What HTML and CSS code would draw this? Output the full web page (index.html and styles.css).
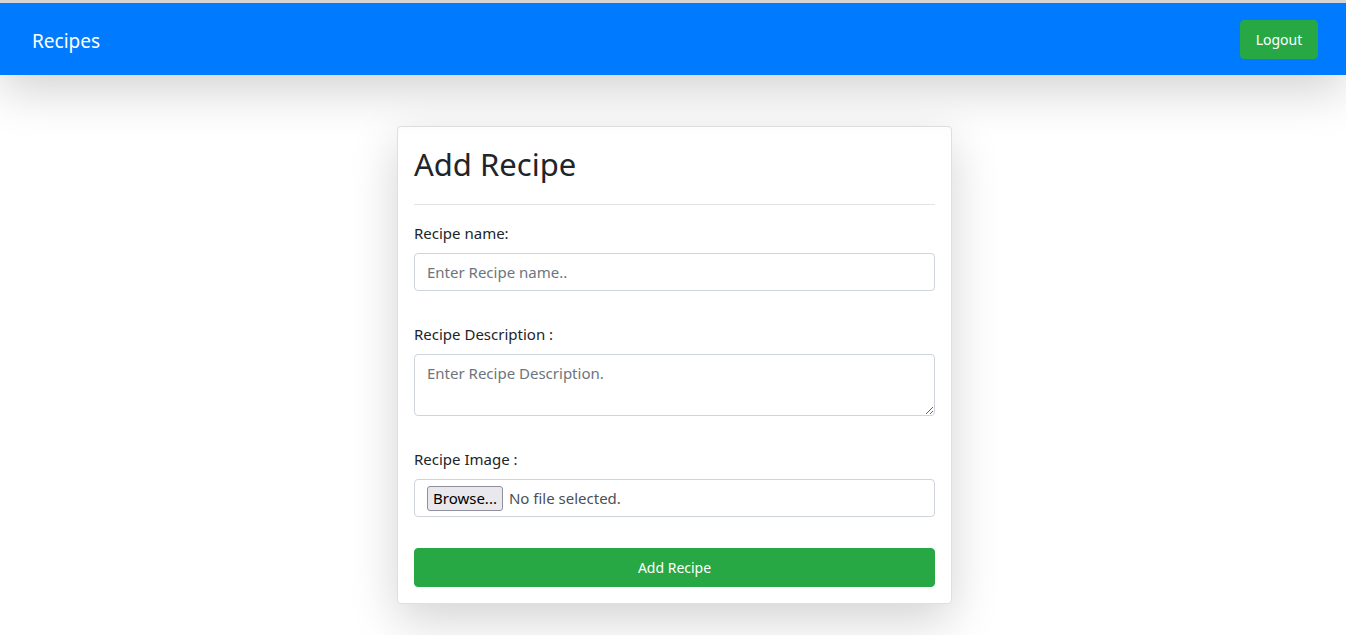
FILE: index.html
```html
<!DOCTYPE html>
<html lang="en">
<head>
<meta charset="utf-8">
<title>Recipes</title>
<link rel="stylesheet" href="styles.css">
</head>
<body>
<nav class="navbar">
  <a class="brand" href="#">Recipes</a>
  <button class="btn btn-success btn-logout" type="button">Logout</button>
</nav>
<main class="main">
  <div class="card">
    <h2 class="title">Add Recipe</h2>
    <hr class="divider">
    <form class="form">
      <div class="group">
        <label class="label" for="name">Recipe name:</label>
        <input class="control" id="name" type="text" placeholder="Enter Recipe name..">
      </div>
      <div class="group">
        <label class="label" for="desc">Recipe Description :</label>
        <textarea class="control area" id="desc" rows="2" placeholder="Enter Recipe Description."></textarea>
      </div>
      <div class="group">
        <label class="label">Recipe Image :</label>
        <div class="control file">
          <span class="browse">Browse...</span>
          <span class="file-text">No file selected.</span>
        </div>
      </div>
      <button class="btn btn-success btn-block" type="button">Add Recipe</button>
    </form>
  </div>
</main>
</body>
</html>
```

FILE: styles.css
```css
* { box-sizing: border-box; }
html, body { margin: 0; padding: 0; }
body {
  font-family: "Noto Sans", "Open Sans", Arial, sans-serif;
  font-size: 16px;
  line-height: 1.5;
  color: #212529;
  background: #fff;
  border-top: 3px solid #d4d4d4;
}
.navbar {
  height: 72px;
  background: #007bff;
  display: flex;
  align-items: center;
  justify-content: space-between;
  padding: 0 28px 0 32px;
  box-shadow: 0 16px 48px rgba(0,0,0,0.175);
  position: relative;
  z-index: 1;
}
.brand {
  color: #fff;
  text-decoration: none;
  font-size: 19px;
  line-height: 30px;
  margin-top: 4px;
}
.btn {
  font-family: inherit;
  border: 1px solid transparent;
  border-radius: 4px;
  color: #fff;
  cursor: pointer;
}
.btn-success { background: #28a745; border-color: #28a745; }
.btn-logout {
  width: 78px;
  height: 39px;
  font-size: 14px;
  padding: 0;
}
.main {
  display: flex;
  justify-content: center;
  padding-top: 51px;
  padding-bottom: 40px;
}
.card {
  width: 555px;
  margin-left: 3px;
  border: 1px solid #dfdfdf;
  border-radius: 4px;
  background: #fff;
  padding: 16px;
  box-shadow: 0 16px 48px rgba(0,0,0,0.175);
}
.title {
  margin: 2px 0 8px;
  font-size: 31px;
  font-weight: 400;
  line-height: 38px;
}
.divider {
  margin: 21px 0 16px;
  border: 0;
  border-top: 1px solid #e3e3e3;
}
.form { margin: 0; }
.group { margin-bottom: 31px; }
.label {
  display: block;
  margin-bottom: 8px;
  font-size: 15px;
  line-height: 24px;
}
.control {
  display: block;
  width: 100%;
  height: 38px;
  padding: 6px 12px;
  font-family: inherit;
  font-size: 15px;
  line-height: 24px;
  color: #495057;
  background: #fff;
  border: 1px solid #ced4da;
  border-radius: 4px;
}
.control::placeholder { color: #6c757d; }
.area {
  height: 62px;
  resize: vertical;
}
.file {
  display: flex;
  align-items: center;
  padding: 0 0 0 12px;
  gap: 6px;
}
.browse {
  display: inline-block;
  height: 25px;
  line-height: 23px;
  padding: 0 5px;
  background: #e9e9ed;
  border: 1px solid #8f8f9d;
  border-radius: 3px;
  color: #000;
  font-size: 15px;
}
.file-text { color: #495057; font-size: 15px; }
.btn-block {
  display: block;
  width: 100%;
  height: 39px;
  font-size: 14px;
}
```
